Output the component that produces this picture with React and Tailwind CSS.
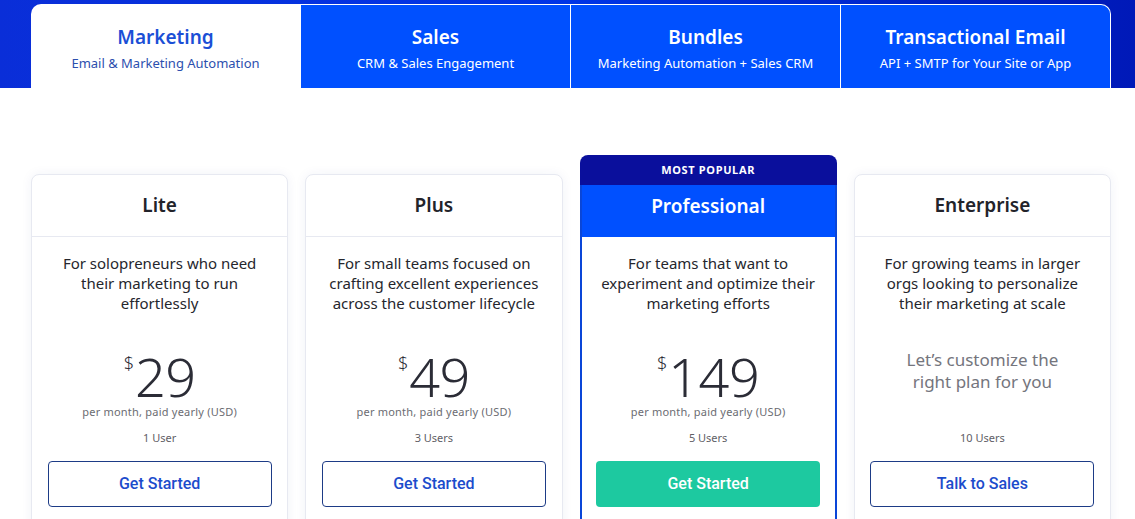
import React from "react";

const tabs = [
  { t: "Marketing", s: "Email & Marketing Automation", active: true },
  { t: "Sales", s: "CRM & Sales Engagement" },
  { t: "Bundles", s: "Marketing Automation + Sales CRM" },
  { t: "Transactional Email", s: "API + SMTP for Your Site or App" },
];

const plans = [
  { name: "Lite", desc: ["For solopreneurs who need", "their marketing to run", "effortlessly"], price: "29", users: "1 User", cta: "Get Started" },
  { name: "Plus", desc: ["For small teams focused on", "crafting excellent experiences", "across the customer lifecycle"], price: "49", users: "3 Users", cta: "Get Started" },
  { name: "Professional", desc: ["For teams that want to", "experiment and optimize their", "marketing efforts"], price: "149", users: "5 Users", cta: "Get Started", popular: true },
  { name: "Enterprise", desc: ["For growing teams in larger", "orgs looking to personalize", "their marketing at scale"], users: "10 Users", cta: "Talk to Sales" },
];

function Card({ p }) {
  return (
    <div
      className={
        "flex flex-col bg-white rounded-[8px] overflow-hidden h-[400px] " +
        (p.popular
          ? "mt-0"
          : "border border-[#e7e9f1] mt-[19px] shadow-[0_0_12px_rgba(40,50,140,0.06)]")
      }
    >
      {p.popular ? (
        <>
          <div className="h-[30px] bg-[#0a0f9c] flex items-center justify-center text-white text-[11px] font-bold tracking-[0.06em]">
            MOST POPULAR
          </div>
          <div className="h-[52px] bg-[#0050ff] flex justify-center pt-[9px] text-white text-[19px] leading-[24px] font-semibold border-x-2 border-[#0a46d8]">
            {p.name}
          </div>
        </>
      ) : (
        <div className="h-[62px] border-b border-[#e7e9f1] flex items-center justify-center text-[#22232a] text-[19px] font-semibold">
          {p.name}
        </div>
      )}
      <div
        className={
          "flex-1 flex flex-col items-center pt-[16px] " +
          (p.popular ? "border-x-2 border-[#0a46d8]" : "")
        }
      >
        <div className="text-[15px] leading-[20px] text-[#25262d] text-center">
          {p.desc.map((l, i) => (
            <div key={i}>{l}</div>
          ))}
        </div>
        <div className="mt-[35px] h-[72px] flex flex-col items-center">
          {p.price ? (
            <>
              <div className="h-[56px] flex items-start justify-center text-[#2b2c36]">
                <span className="text-[18px] font-light leading-none mt-[6px] mr-[1px]">$</span>
                <span className="text-[54px] font-light leading-[44px] mt-[6px] tracking-[-0.01em]">{p.price}</span>
              </div>
              <div className="text-[11px] leading-[16px] text-[#6b6c72] tracking-[0.02em]">per month, paid yearly (USD)</div>
            </>
          ) : (
            <div className="text-[17px] leading-[22px] text-[#74757d] text-center mt-[1px]">
              <div>Let’s customize the</div>
              <div>right plan for you</div>
            </div>
          )}
        </div>
        <div className="mt-[10px] text-[11px] leading-[16px] text-[#5f6066]">{p.users}</div>
        <button
          className={
            "mt-[15px] w-[224px] h-[46px] rounded-[4px] text-[16px] font-medium font-['Roboto',sans-serif] " +
            (p.popular
              ? "bg-[#1dc9a0] text-white"
              : "border border-[#1d3b86] text-[#1c4ccc] bg-white")
          }
        >
          {p.cta}
        </button>
      </div>
    </div>
  );
}

export default function App() {
  return (
    <div className="w-[1135px] h-[519px] overflow-hidden bg-white font-['Noto_Sans',sans-serif]">
      <div className="h-[88px] bg-gradient-to-r from-[#0a2ed8] via-[#0035e6] to-[#0019b8] pt-[4px] px-[31px]">
        <div className="flex h-[84px] w-[1080px]">
          {tabs.map((t, i) => (
            <div
              key={i}
              className={
                "flex-1 flex flex-col items-center " +
                (t.active
                  ? "bg-white rounded-tl-[10px] pt-[21px]"
                  : "bg-[#0050ff] border-t border-l border-white pt-[20px] " +
                    (i === tabs.length - 1 ? "border-r rounded-tr-[10px]" : ""))
              }
            >
              <div className={"text-[19px] leading-[24px] font-semibold " + (t.active ? "text-[#1b4fd6]" : "text-white")}>
                {t.t}
              </div>
              <div className={"mt-[5px] text-[13px] leading-[18px] " + (t.active ? "text-[#2c4fae]" : "text-white")}>
                {t.s}
              </div>
            </div>
          ))}
        </div>
      </div>
      <div className="px-[31px] pt-[67px] grid grid-cols-4 gap-[17px] w-[1142px]">
        {plans.map((p, i) => (
          <Card key={i} p={p} />
        ))}
      </div>
    </div>
  );
}
